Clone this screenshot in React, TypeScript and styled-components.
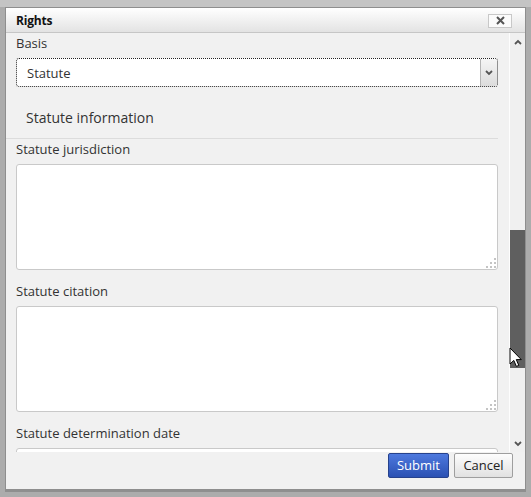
import React from 'react';
import styled, { createGlobalStyle } from 'styled-components';

const Global = createGlobalStyle`
  html, body { margin: 0; padding: 0; }
  body {
    background: #acacac;
    font-family: "Open Sans", "DejaVu Sans", sans-serif;
    width: 531px;
    height: 497px;
    overflow: hidden;
  }
`;

const Screen = styled.div`
  position: relative;
  width: 531px;
  height: 497px;
  box-sizing: border-box;
  padding: 7px 5px 0 5px;
  background: linear-gradient(#c4c4c4 0 7px, #acacac 7px);
`;

const Dialog = styled.div`
  width: 521px;
  height: 483px;
  box-sizing: border-box;
  border: 1px solid #8e8e8e;
  background: #f1f1f1;
  display: flex;
  flex-direction: column;
  box-shadow: 0 2px 0 #8f8f8f;
`;

const TitleBar = styled.div`
  height: 25px;
  box-sizing: border-box;
  flex: none;
  display: flex;
  align-items: center;
  justify-content: space-between;
  padding: 0 13px 0 10px;
  background: linear-gradient(#ffffff, #e3e3e3);
  border-bottom: 1px solid #c6c6c6;
`;

const Title = styled.div`
  font-size: 12px;
  font-weight: 700;
  color: #111;
  letter-spacing: -0.2px;
`;

const CloseButton = styled.div`
  width: 24px;
  height: 14px;
  box-sizing: border-box;
  border: 1px solid #c8c8c8;
  background: #fbfbfb;
  display: flex;
  align-items: center;
  justify-content: center;
  margin-top: 1px;
`;

const Body = styled.div`
  flex: 1;
  min-height: 0;
  display: flex;
`;

const Content = styled.div`
  flex: 1;
  min-width: 0;
  overflow: hidden;
  padding: 1px 11px 0 10px;
  display: flex;
  flex-direction: column;
`;

const Label = styled.div<{ $mt?: number }>`
  flex: none;
  font-size: 13px;
  line-height: 18px;
  color: #333;
  margin-top: ${(p) => p.$mt ?? 0}px;
`;

const Select = styled.div`
  flex: none;
  margin-top: 6px;
  height: 29px;
  box-sizing: border-box;
  border: 1px dotted #222;
  border-radius: 3px;
  background: #fff;
  display: flex;
  align-items: stretch;
  overflow: hidden;
`;

const SelectValue = styled.div`
  flex: 1;
  display: flex;
  align-items: center;
  padding-left: 10px;
  font-size: 13px;
  color: #333;
`;

const SelectArrow = styled.div`
  width: 16px;
  border-left: 1px solid #b4b4b4;
  background: linear-gradient(#f5f5f5, #dcdcdc);
  display: flex;
  align-items: center;
  justify-content: center;
`;

const SectionHead = styled.div`
  flex: none;
  margin: 21px 0 0 -10px;
  padding: 0 0 10px 20px;
  font-size: 14px;
  line-height: 20px;
  color: #333;
  border-bottom: 1px solid #dcdcdc;
`;

const AreaWrap = styled.div`
  position: relative;
  margin-top: 6px;
  flex: none;
`;

const TextArea = styled.textarea<{ $h: number }>`
  display: block;
  width: 100%;
  height: ${(p) => p.$h}px;
  box-sizing: border-box;
  border: 1px solid #c9c9c9;
  border-radius: 3px;
  background: #fff;
  resize: none;
  outline: none;
  margin: 0;
  font-family: inherit;
`;

const Grip = styled.svg`
  position: absolute;
  right: 2px;
  bottom: 2px;
`;

const Scrollbar = styled.div`
  width: 16px;
  flex: none;
  box-sizing: border-box;
  border-left: 1px solid #fdfdfd;
  background: #f0f0f0;
  display: flex;
  flex-direction: column;
`;

const ScrollButton = styled.div`
  height: 17px;
  flex: none;
  display: flex;
  align-items: center;
  justify-content: center;
`;

const Track = styled.div`
  flex: 1;
  display: flex;
  flex-direction: column;
`;

const TrackGap = styled.div<{ $h: number }>`
  height: ${(p) => p.$h}px;
  flex: none;
`;

const Thumb = styled.div<{ $h: number }>`
  height: ${(p) => p.$h}px;
  flex: none;
  background: #5f5f5f;
`;

const Footer = styled.div`
  height: 37px;
  flex: none;
  box-sizing: border-box;
  display: flex;
  justify-content: flex-end;
  align-items: flex-start;
  gap: 5px;
  padding: 1px 12px 0 0;
`;

const Button = styled.button<{ $primary?: boolean; $w: number }>`
  width: ${(p) => p.$w}px;
  height: 25px;
  box-sizing: border-box;
  padding: 0 0 1px;
  border-radius: 2px;
  font-family: "Open Sans", "DejaVu Sans", sans-serif;
  font-size: 13px;
  line-height: 1;
  cursor: default;
  border: 1px solid ${(p) => (p.$primary ? '#26428d' : '#9e9e9e')};
  color: ${(p) => (p.$primary ? '#ffffff' : '#222222')};
  background: ${(p) =>
    p.$primary
      ? 'linear-gradient(#4d79de, #2b51b3)'
      : 'linear-gradient(#fdfdfd, #e1e1e1)'};
`;

const Cursor = styled.svg`
  position: absolute;
  left: 509px;
  top: 347px;
`;

const Chevron = ({ up }: { up?: boolean }) => (
  <svg width="8" height="6" viewBox="0 0 8 6">
    <path
      d={up ? 'M1 5 L4 2 L7 5' : 'M1 1 L4 4 L7 1'}
      fill="none"
      stroke="#555"
      strokeWidth="1.8"
    />
  </svg>
);

const ResizeGrip = () => (
  <Grip width="11" height="11" viewBox="0 0 11 11">
    <g fill="#c4c4c4">
      <rect x="9" y="1" width="2" height="2" />
      <rect x="5" y="5" width="2" height="2" />
      <rect x="9" y="5" width="2" height="2" />
      <rect x="1" y="9" width="2" height="2" />
      <rect x="5" y="9" width="2" height="2" />
      <rect x="9" y="9" width="2" height="2" />
    </g>
  </Grip>
);

export default function App() {
  return (
    <>
      <Global />
      <Screen>
        <Dialog>
          <TitleBar>
            <Title>Rights</Title>
            <CloseButton>
              <svg width="9" height="9" viewBox="0 0 9 9">
                <path d="M1 1 L8 8 M8 1 L1 8" stroke="#555" strokeWidth="2" />
              </svg>
            </CloseButton>
          </TitleBar>
          <Body>
            <Content>
              <Label>Basis</Label>
              <Select>
                <SelectValue>Statute</SelectValue>
                <SelectArrow>
                  <Chevron />
                </SelectArrow>
              </Select>
              <SectionHead>Statute information</SectionHead>
              <Label $mt={1}>Statute jurisdiction</Label>
              <AreaWrap>
                <TextArea $h={106} />
                <ResizeGrip />
              </AreaWrap>
              <Label $mt={12}>Statute citation</Label>
              <AreaWrap>
                <TextArea $h={106} />
                <ResizeGrip />
              </AreaWrap>
              <Label $mt={12}>Statute determination date</Label>
              <AreaWrap>
                <TextArea $h={29} />
              </AreaWrap>
            </Content>
            <Scrollbar>
              <ScrollButton>
                <Chevron up />
              </ScrollButton>
              <Track>
                <TrackGap $h={180} />
                <Thumb $h={138} />
              </Track>
              <ScrollButton>
                <Chevron />
              </ScrollButton>
            </Scrollbar>
          </Body>
          <Footer>
            <Button $primary $w={61}>Submit</Button>
            <Button $w={59}>Cancel</Button>
          </Footer>
        </Dialog>
        <Cursor width="14" height="22" viewBox="0 0 14 22">
          <path
            d="M1 1 L1 17 L4.8 13.4 L7.4 19.4 L9.8 18.4 L7.3 12.6 L12.3 12.6 Z"
            fill="#fff"
            stroke="#000"
            strokeWidth="1"
            strokeLinejoin="round"
          />
        </Cursor>
      </Screen>
    </>
  );
}
